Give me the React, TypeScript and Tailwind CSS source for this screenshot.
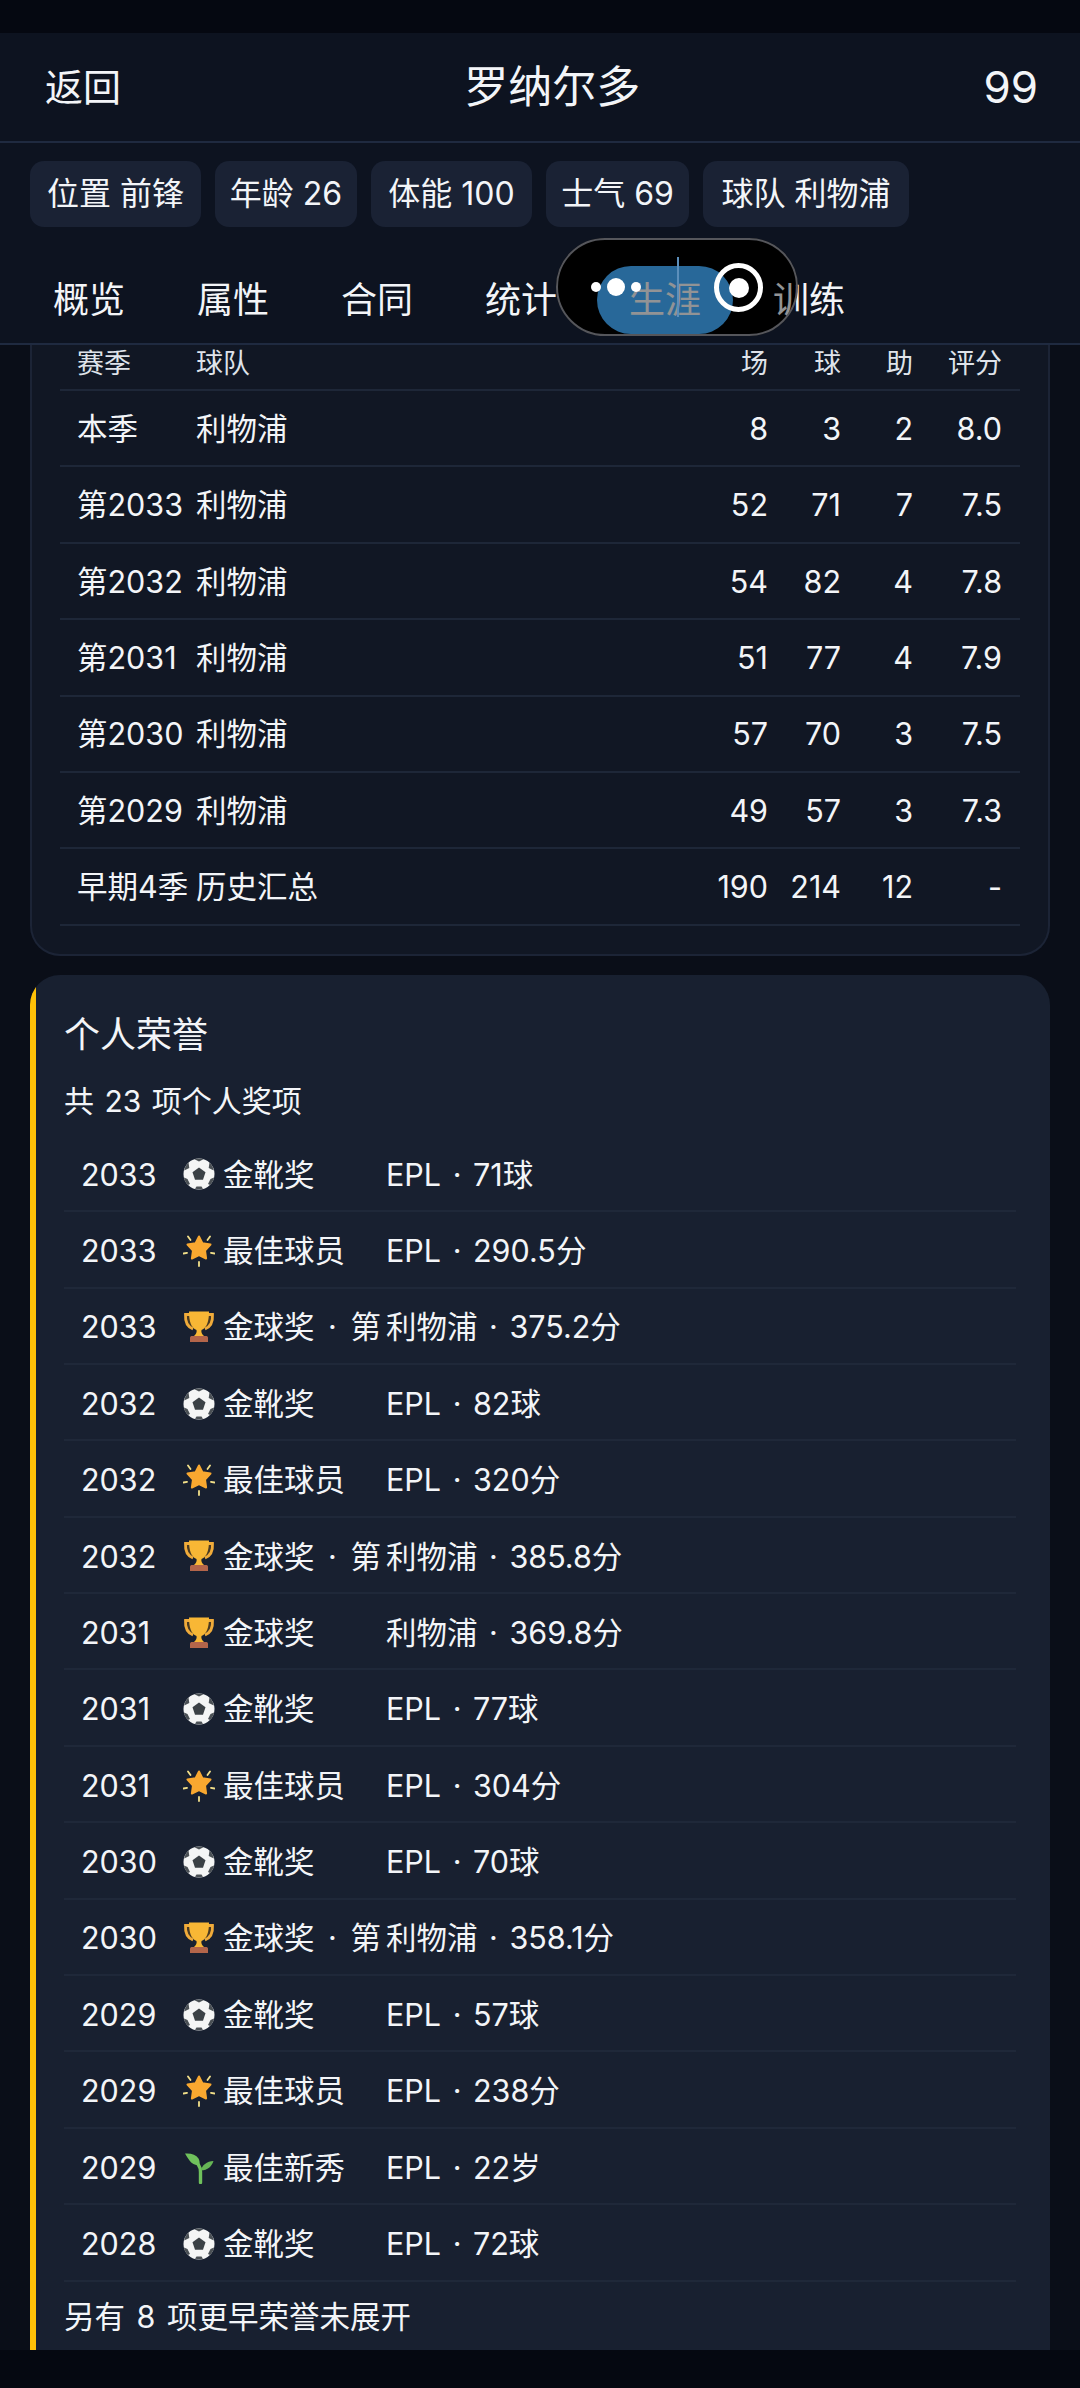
const font = { fontFamily: '"Inter", "Noto Sans CJK SC", sans-serif' };

function Ball() {
  return (
    <svg width="32" height="32" viewBox="0 0 32 32" className="shrink-0">
      <circle cx="16" cy="16" r="15.500" fill="#f4f5f5" />
      <path d="M16 9.500l6.500 4.700-2.500 7.600h-8l-2.500-7.600z" fill="#3b4146" />
      <path d="M11.500 1.300c3-.6 6-.6 9 0L16 3.500zM1.200 12.500C1.800 9 3.500 6.500 5.500 4.500l.8 5.500zM30.800 12.500C30.200 9 28.500 6.500 26.500 4.500l-.8 5.500zM5 27C2.700 24.500 1.300 22 1 19.500l3.500 1.500 2.500 5zM27 27c2.300-2.500 3.700-5 4-7.500L27.500 21 25 26zM12 30.800c2.700.5 5.300.5 8 0l-1.500-2.300h-5z" fill="#4a5055" />
    </svg>
  );
}

function Star() {
  return (
    <svg width="32" height="32" viewBox="0 0 32 32" className="shrink-0">
      <path d="M16 1.500l3.400 6.800 8.100 1.300-5.500 5.900 1.100 8-7.100-3.500-7.100 3.500 1.100-8-5.500-5.900 8.100-1.300z" fill="#f9a830" stroke="#f9a830" strokeWidth="2" strokeLinejoin="round" />
      <path d="M5 1.500l2.500 3.500M27 1.500L24.500 5M.5 18.500l3.500-.7M31.500 18.500l-3.500-.7M16 27v4" stroke="#f3e08a" strokeWidth="1.800" strokeLinecap="round" fill="none" />
    </svg>
  );
}

function Trophy() {
  return (
    <svg width="32" height="32" viewBox="0 0 32 32" className="shrink-0">
      <path d="M7 3.500H2.500C2 11 4 15.500 10 18M25 3.500h4.500c.5 7.500-1.500 12-7.500 14.500" stroke="#f0ab3a" strokeWidth="2.800" fill="#4a3a22" />
      <path d="M6 .5h20c0 10-2 16-7.500 18.500-.5 2 .2 4 2.500 6H11c2.300-2 3-4 2.500-6C8 16.500 6 10.500 6 .5z" fill="#f8b735" />
      <path d="M8.500 25h15c1 0 1.500 1 1.500 2v4H7v-4c0-1 .5-2 1.500-2z" fill="#b3654a" />
    </svg>
  );
}

function Seedling() {
  return (
    <svg width="32" height="32" viewBox="0 0 32 32" className="shrink-0">
      <path d="M17.500 30.500V20c0-3-.5-5-2-7" stroke="#6fc15c" strokeWidth="3.400" fill="none" strokeLinecap="round" />
      <path d="M2 1.500c6-.5 11 1 13.500 5 1 2 1.500 4.500 1 7-5-.5-8-2-10-5C5 6.500 3.500 4 2 1.500z" fill="#6fc15c" />
      <path d="M18 18.500c.5-5 6-9.500 12.500-9.500-1.500 5-6 9.500-12.500 9.500z" fill="#66b655" />
    </svg>
  );
}

const seasons = [
  ['本季', '利物浦', '8', '3', '2', '8.0'],
  ['第2033', '利物浦', '52', '71', '7', '7.5'],
  ['第2032', '利物浦', '54', '82', '4', '7.8'],
  ['第2031', '利物浦', '51', '77', '4', '7.9'],
  ['第2030', '利物浦', '57', '70', '3', '7.5'],
  ['第2029', '利物浦', '49', '57', '3', '7.3'],
  ['早期4季', '历史汇总', '190', '214', '12', '-'],
];

type Honor = [string, 'ball' | 'star' | 'cup' | 'leaf', string, string];
const honors: Honor[] = [
  ['2033', 'ball', '金靴奖', 'EPL · 71球'],
  ['2033', 'star', '最佳球员', 'EPL · 290.5分'],
  ['2033', 'cup', '金球奖 · 第', '利物浦 · 375.2分'],
  ['2032', 'ball', '金靴奖', 'EPL · 82球'],
  ['2032', 'star', '最佳球员', 'EPL · 320分'],
  ['2032', 'cup', '金球奖 · 第', '利物浦 · 385.8分'],
  ['2031', 'cup', '金球奖', '利物浦 · 369.8分'],
  ['2031', 'ball', '金靴奖', 'EPL · 77球'],
  ['2031', 'star', '最佳球员', 'EPL · 304分'],
  ['2030', 'ball', '金靴奖', 'EPL · 70球'],
  ['2030', 'cup', '金球奖 · 第', '利物浦 · 358.1分'],
  ['2029', 'ball', '金靴奖', 'EPL · 57球'],
  ['2029', 'star', '最佳球员', 'EPL · 238分'],
  ['2029', 'leaf', '最佳新秀', 'EPL · 22岁'],
  ['2028', 'ball', '金靴奖', 'EPL · 72球'],
];

const icons = { ball: <Ball />, star: <Star />, cup: <Trophy />, leaf: <Seedling /> };
const chips = [
  { text: '位置 前锋', w: 'w-[171px]' },
  { text: '年龄 26', w: 'w-[142px]' },
  { text: '体能 100', w: 'w-[161px]' },
  { text: '士气 69', w: 'w-[143px]' },
  { text: '球队 利物浦', w: 'w-[206px]' },
];
const tabs = ['概览', '属性', '合同', '统计', '生涯', '训练'];

export default function App() {
  return (
    <div style={font} className="w-[1080px] h-[2388px] overflow-hidden flex flex-col bg-[#0a0e18] text-[#f3f5f8]">
      <div className="h-[33px] shrink-0 bg-[#050811]" />

      <header className="h-[110px] shrink-0 flex items-center justify-between pl-[45px] pr-[42px] bg-[#0d1320] border-b-2 border-[#1f2a40]">
        <span className="text-[38px]">返回</span>
        <span className="text-[44px]">罗纳尔多</span>
        <span className="text-[44px]">99</span>
      </header>

      <div className="relative shrink-0 h-[202px] bg-[#0d1320] border-b-2 border-[#1f2a40]">
        <div className="flex gap-[14px] pl-[30px] pt-[18px]">
          {chips.map((c) => (
            <span key={c.text} className={`h-[66px] flex items-center justify-center rounded-[14px] bg-[#1a2234] text-[32px] whitespace-nowrap ${c.w}`}>{c.text}</span>
          ))}
        </div>
        <div className="absolute left-[556px] top-[95px] w-[242px] h-[98px] rounded-full bg-black" />
        <div className="relative flex gap-[8px] pl-[21px] mt-[39px]">
          {tabs.map((t) => (
            <span key={t} className={`h-[68px] flex items-center justify-center w-[136px] rounded-[34px] text-[36px] ${t === '生涯' ? 'bg-[#44aeff]' : ''}`}>{t}</span>
          ))}
        </div>
        {/* floating camera pill over the tabs */}
        <div className="absolute left-[556px] top-[95px] w-[242px] h-[98px] rounded-full bg-black/40 border-2 border-[#55565b]" />
        <div className="absolute left-[677px] top-[114px] w-[2px] h-[60px] bg-[#5c8fbb]" />
        <div className="absolute left-[591px] top-[139px] w-[10px] h-[10px] rounded-full bg-white" />
        <div className="absolute left-[607px] top-[135px] w-[18px] h-[18px] rounded-full bg-white" />
        <div className="absolute left-[631px] top-[139px] w-[10px] h-[10px] rounded-full bg-white" />
        <div className="absolute left-[714px] top-[120px] w-[49px] h-[49px] rounded-full border-[5px] border-white flex items-center justify-center">
          <div className="w-[20px] h-[20px] rounded-full bg-white" />
        </div>
      </div>

      <main className="flex-1 min-h-0 px-[30px] flex flex-col gap-[19px]">
        <section className="shrink-0 rounded-b-[30px] border-2 border-t-0 border-[#1c2436] bg-[#111724] px-[28px] pb-[28px]">
          <div className="h-[46px] flex items-center pl-[17px] pr-[18px] pb-[6px] border-b-2 border-[#1e2738] text-[27px] text-[#dfe3ea]">
            <span className="w-[119px]">赛季</span>
            <span className="flex-1">球队</span>
            <span className="w-[72px] text-right">场</span>
            <span className="w-[73px] text-right">球</span>
            <span className="w-[72px] text-right">助</span>
            <span className="w-[89px] text-right">评分</span>
          </div>
          {seasons.map((r) => (
            <div key={r[0]} className="h-[76.4px] flex items-center pl-[17px] pr-[18px] pt-[1px] border-b-2 border-[#1e2738] text-[30.5px] whitespace-nowrap">
              <span className="w-[119px]">{r[0]}</span>
              <span className="flex-1">{r[1]}</span>
              <span className="w-[72px] text-right">{r[2]}</span>
              <span className="w-[73px] text-right">{r[3]}</span>
              <span className="w-[72px] text-right">{r[4]}</span>
              <span className="w-[89px] text-right">{r[5]}</span>
            </div>
          ))}
        </section>

        <section className="flex-1 min-h-0 flex overflow-hidden rounded-t-[30px] bg-[#182030]">
          <div className="w-[6px] shrink-0 bg-[#ffc107]" />
          <div className="flex-1 min-w-0 pl-[28px] pr-[34px] pt-[38px]">
            <h2 className="text-[36px] leading-[44px] font-normal">个人荣誉</h2>
            <p className="mt-[22px] text-[30px] leading-[44px] [word-spacing:2px]">共 23 项个人奖项</p>
            <div className="mt-[13px]">
              {honors.map((h, i) => (
                <div key={i} className="h-[76.4px] flex items-center pl-[17px] pt-[3px] border-b-2 border-[#1f2839] text-[30.5px] whitespace-nowrap">
                  <span className="w-[102px]">{h[0]}</span>
                  {icons[h[1]]}
                  <span className="w-[163px] ml-[8px] [word-spacing:5px]">{h[2]}</span>
                  <span className="[word-spacing:3px]">{h[3]}</span>
                </div>
              ))}
            </div>
            <p className="mt-[13px] text-[30.5px] leading-[44px] [word-spacing:3px]">另有 8 项更早荣誉未展开</p>
          </div>
        </section>
      </main>

      <div className="h-[38px] shrink-0 bg-[#050811]" />
    </div>
  );
}
